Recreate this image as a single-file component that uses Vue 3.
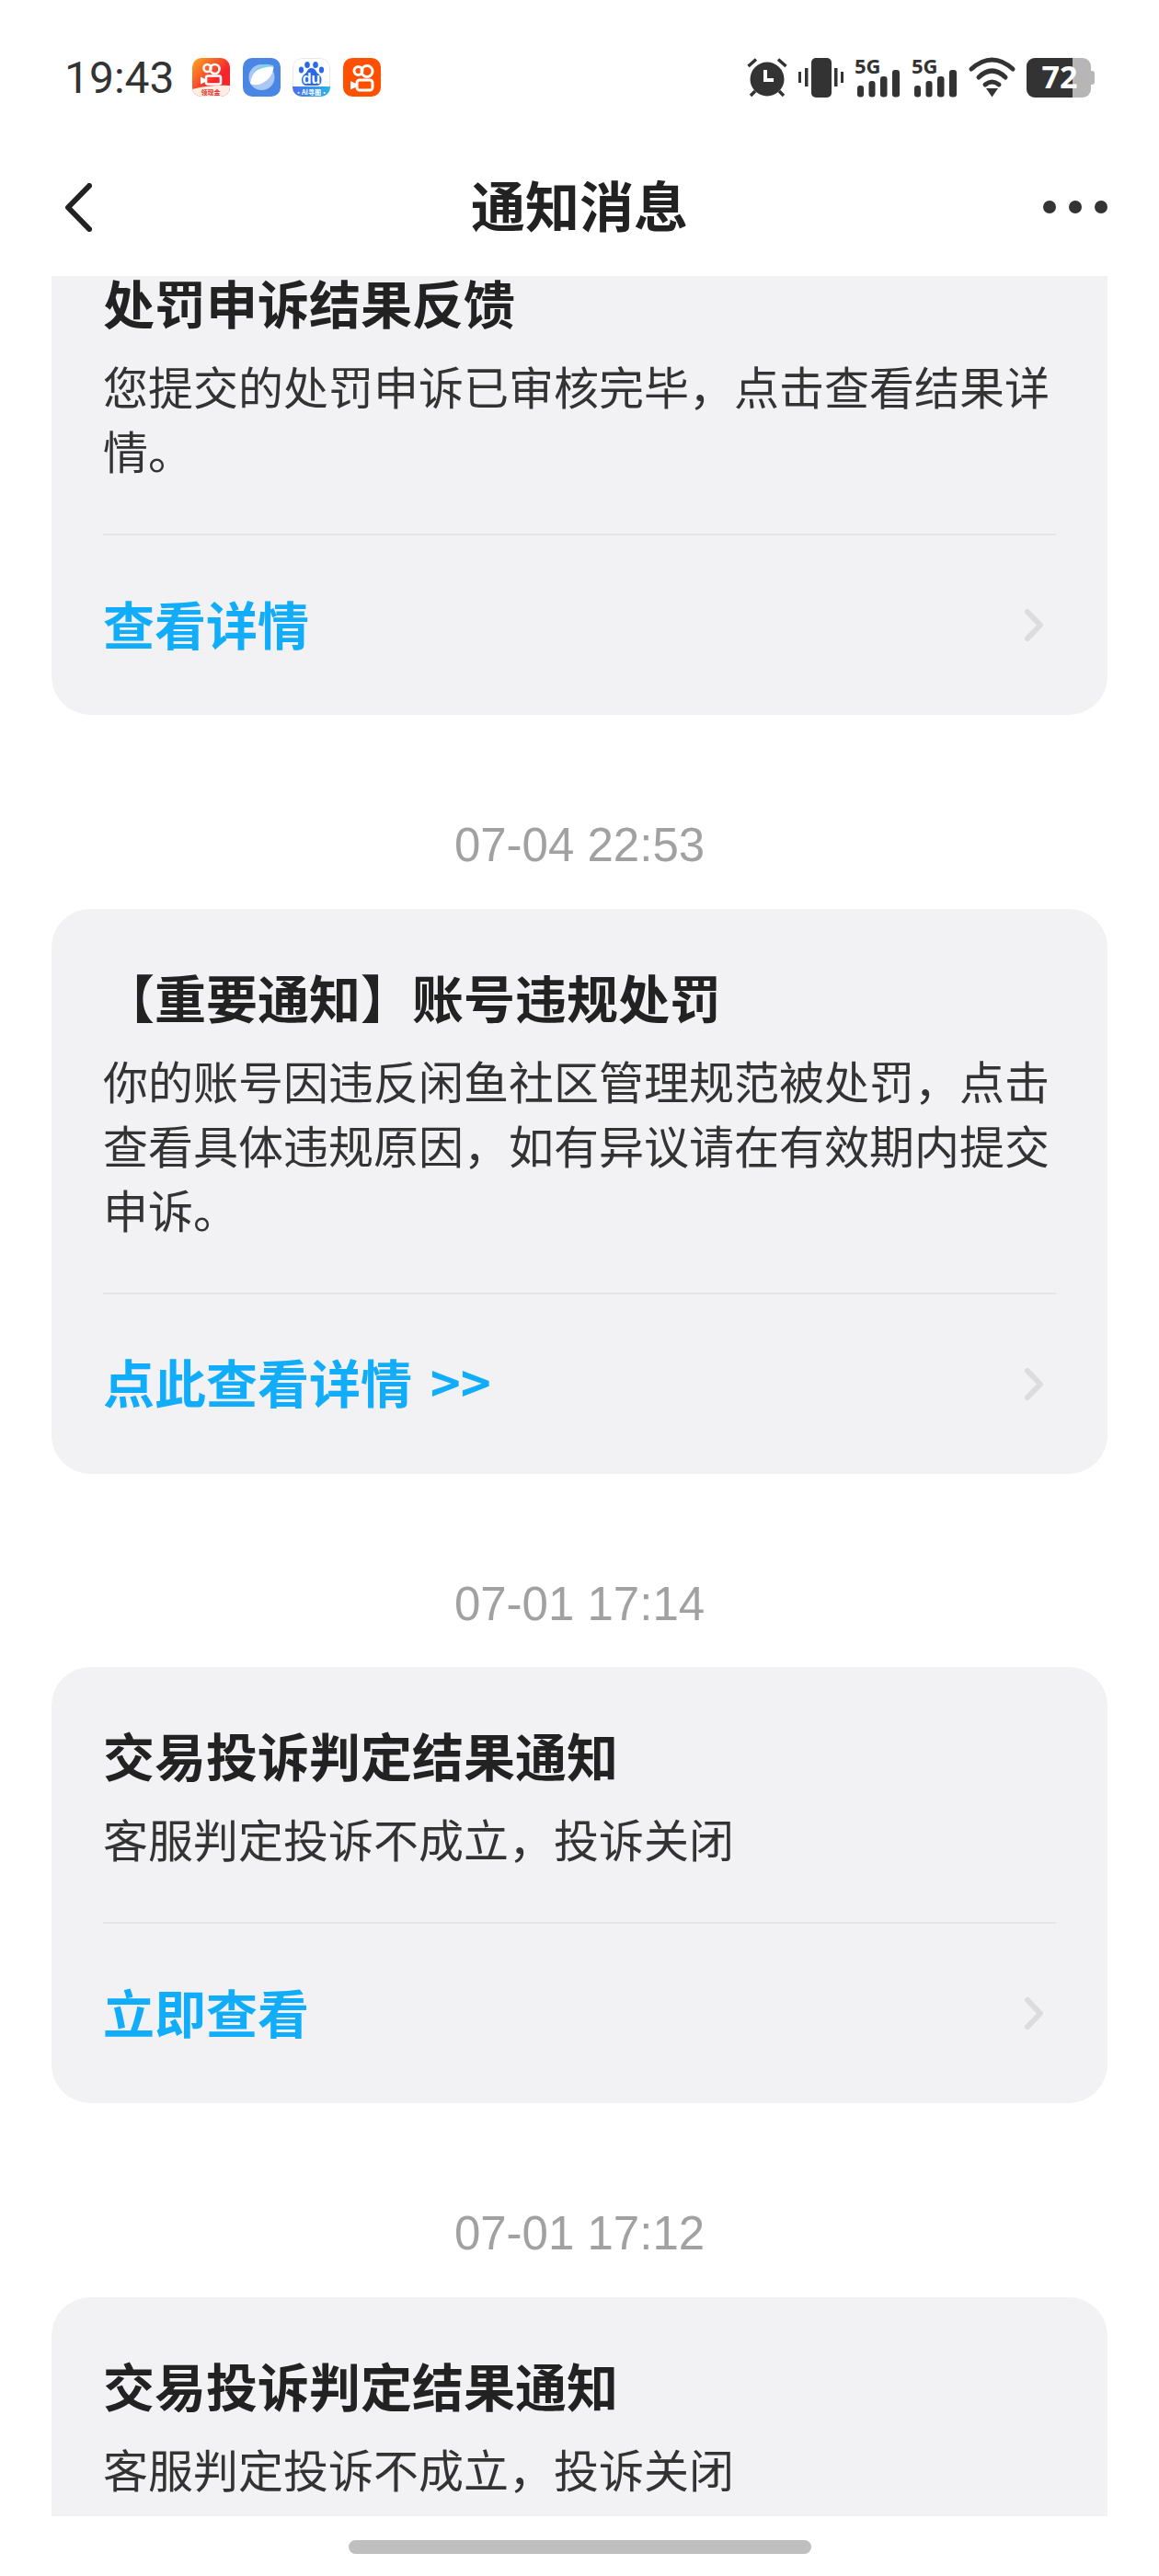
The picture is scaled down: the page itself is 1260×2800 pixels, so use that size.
<template>
  <div class="phone">
    <div class="status-bar">
      <span class="clock">19:43</span>
      <div class="app-icons">
        <svg width="41" height="42" viewBox="0 0 41 42">
          <defs>
            <linearGradient id="ks" x1="0" y1="0" x2="1" y2="1">
              <stop offset="0" stop-color="#ffa91f" />
              <stop offset="0.6" stop-color="#f5252e" />
            </linearGradient>
            <clipPath id="round"><rect width="41" height="42" rx="10" /></clipPath>
          </defs>
          <g clip-path="url(#round)">
            <rect width="41" height="42" fill="url(#ks)" />
            <g fill="none" stroke="#fff" stroke-width="2.6">
              <circle cx="16.500" cy="11" r="4" />
              <circle cx="24.500" cy="12" r="5" />
              <rect x="15" y="19.500" width="16" height="9" rx="2" />
            </g>
            <path d="M9 20.500l6 3v2l-6 3z" fill="#fff" />
            <path d="M0 34q20-5 41-4v12H0z" fill="#fdeee3" />
            <text x="20" y="40" class="tiny red">领现金</text>
          </g>
        </svg>
        <svg width="41" height="42" viewBox="0 0 41 42">
          <rect width="41" height="42" rx="10" fill="#4a86e3" />
          <circle cx="20.5" cy="21" r="14" fill="#a9c8f3" />
          <path d="M8 28Q9 17 18 11q7-4 14-3 2 1 1 5-2 9-11 14-7 4-14 1z" fill="#fff" />
          <path d="M11 16q4-7 12-9 7-1 11 3-10-2-23 6z" fill="#7fd0ec" />
        </svg>
        <svg width="41" height="42" viewBox="0 0 41 42">
          <defs>
            <linearGradient id="band" x1="0" y1="0" x2="1" y2="0">
              <stop offset="0" stop-color="#4f6cf0" />
              <stop offset="1" stop-color="#27b5ea" />
            </linearGradient>
            <clipPath id="round3"><rect width="41" height="42" rx="10" /></clipPath>
          </defs>
          <g clip-path="url(#round3)">
            <rect width="41" height="42" fill="#fff" />
            <rect x="0.5" y="0.5" width="40" height="41" rx="10" fill="none" stroke="#e8e8ec" />
            <rect y="31" width="41" height="11" fill="url(#band)" />
            <g fill="#2a6ae8">
              <ellipse cx="9.5" cy="13" rx="2.6" ry="3.4" />
              <ellipse cx="16" cy="7.5" rx="2.8" ry="3.6" />
              <ellipse cx="25" cy="7.5" rx="2.8" ry="3.6" />
              <ellipse cx="31.5" cy="13" rx="2.6" ry="3.4" />
              <path d="M20.5 11q4 0 6 5 5 3 5 8 0 6-6 6H16q-6 0-6-6 0-5 5-8 2-5 5.500-5z" />
            </g>
            <text x="20.500" y="28" class="du">du</text>
            <text x="20.500" y="39.500" class="tiny white">·AI寻图·</text>
          </g>
        </svg>
        <svg width="41" height="42" viewBox="0 0 41 42">
          <rect width="41" height="42" rx="10" fill="#ff5000" />
          <g fill="none" stroke="#fff" stroke-width="3">
            <circle cx="16.500" cy="14" r="4.500" />
            <circle cx="26" cy="14.500" r="6" />
            <rect x="15" y="24" width="17" height="11" rx="3" />
          </g>
          <path d="M8 25l7 3.500v2.500l-7 3.500z" fill="#fff" />
        </svg>
      </div>
      <div class="sys-icons">
        <svg width="44" height="43" viewBox="0 0 44 43">
          <circle cx="22" cy="23" r="18.500" fill="#333" />
          <path d="M20 13v11h9" fill="none" stroke="#fff" stroke-width="4" />
          <path d="M1.500 9l8.500-7.500M42.500 9L34 1.500M4 41l5-5M40 41l-5-5" stroke="#333" stroke-width="3.500" />
        </svg>
        <svg width="49" height="43" viewBox="0 0 49 43">
          <rect x="14" width="22" height="43" rx="5" fill="#333" />
          <rect y="15" width="3" height="12" fill="#333" />
          <rect x="7" y="11" width="3.500" height="20" fill="#333" />
          <rect x="39" y="11" width="3.500" height="20" fill="#333" />
          <rect x="46" y="15" width="3" height="12" fill="#333" />
        </svg>
        <svg v-for="n in 2" :key="n" width="50" height="43" viewBox="0 0 50 43">
          <text x="0" y="17" class="five-g">5G</text>
          <rect x="3" y="30" width="7" height="12.500" rx="3" fill="#333" />
          <rect x="15.500" y="25" width="7" height="17.500" rx="3" fill="#333" />
          <rect x="28" y="20" width="7.500" height="22.500" rx="3" fill="#333" />
          <rect x="41" y="13" width="8" height="29.500" rx="3" fill="#333" />
        </svg>
        <svg width="51" height="43" viewBox="0 0 51 43">
          <g fill="none" stroke="#333" stroke-width="5" stroke-linecap="round">
            <path d="M3 12Q25.500-8 48 12" />
            <path d="M11 21Q25.500 7 40 21" />
            <path d="M18 29Q25.500 23 33 29" />
          </g>
          <path d="M19 33h13l-6.500 9.500z" fill="#333" />
        </svg>
        <svg width="74" height="43" viewBox="0 0 74 43">
          <defs><clipPath id="charged"><rect width="50" height="43" /></clipPath></defs>
          <rect width="70" height="43" rx="9" fill="#b6b6b6" />
          <rect x="68" y="14" width="6" height="15" rx="3" fill="#b6b6b6" />
          <rect width="70" height="43" rx="9" fill="#333" clip-path="url(#charged)" />
          <text x="36" y="33" class="level">72</text>
        </svg>
      </div>
    </div>

    <header class="nav">
      <svg class="back" width="30" height="53" viewBox="0 0 30 53">
        <path d="M27 3L4 26.500 27 50" fill="none" stroke="#222" stroke-width="6" stroke-linecap="round" stroke-linejoin="round" />
      </svg>
      <h1>通知消息</h1>
      <div class="more"><i></i><i></i><i></i></div>
    </header>

    <main class="list">
      <div class="list-inner">
        <template v-for="(msg, i) in messages" :key="i">
          <p v-if="msg.time" class="time">{{ msg.time }}</p>
          <article class="card">
            <div class="card-body">
              <h2>{{ msg.title }}</h2>
              <p>{{ msg.text }}</p>
            </div>
            <div v-if="msg.link" class="card-link">
              <span>{{ msg.link }}</span>
              <svg width="22" height="35" viewBox="0 0 22 35">
                <path d="M4 3l14 14.500L4 32" fill="none" stroke="#dcdcde" stroke-width="6" stroke-linecap="round" stroke-linejoin="round" />
              </svg>
            </div>
          </article>
        </template>
      </div>
    </main>

    <div class="home-bar"></div>
  </div>
</template>

<script setup>
const messages = [
  {
    title: '处罚申诉结果反馈',
    text: '您提交的处罚申诉已审核完毕，点击查看结果详情。',
    link: '查看详情',
  },
  {
    time: '07-04 22:53',
    title: '【重要通知】账号违规处罚',
    text: '你的账号因违反闲鱼社区管理规范被处罚，点击查看具体违规原因，如有异议请在有效期内提交申诉。',
    link: '点此查看详情 >>',
  },
  {
    time: '07-01 17:14',
    title: '交易投诉判定结果通知',
    text: '客服判定投诉不成立，投诉关闭',
    link: '立即查看',
  },
  {
    time: '07-01 17:12',
    title: '交易投诉判定结果通知',
    text: '客服判定投诉不成立，投诉关闭',
  },
]
</script>

<style>
html, body { background: #fff; }
</style>

<style scoped>
.phone { width: 1260px; height: 2800px; background: #fff; display: flex; flex-direction: column; font-family: "Liberation Sans", "Noto Sans CJK SC", sans-serif; color: #222; overflow: hidden; }

.status-bar { height: 150px; box-sizing: border-box; padding: 63px 70px 0; display: flex; align-items: flex-start; }
.status-bar svg { display: block; flex: none; overflow: visible; }
.clock { font-family: Roboto, sans-serif; font-size: 48px; line-height: 43px; color: #333; width: 139px; }
.app-icons { display: flex; gap: 13.5px; }
.sys-icons { margin-left: auto; display: flex; gap: 12px; }
.five-g { font-family: "Noto Sans", sans-serif; font-weight: 700; font-size: 22px; fill: #333; }
.level { font-family: "Noto Sans", sans-serif; font-weight: 700; font-size: 34px; fill: #fff; text-anchor: middle; }
.tiny { font-family: "Noto Sans CJK SC", sans-serif; font-size: 7px; font-weight: 700; text-anchor: middle; }
.tiny.red { fill: #e8302c; }
.tiny.white { fill: #fff; }
.du { font-family: "Liberation Sans", sans-serif; font-size: 16px; font-weight: 700; fill: #fff; text-anchor: middle; }

.nav { height: 150px; box-sizing: border-box; padding: 0 56px 0 70px; display: flex; align-items: center; justify-content: space-between; position: relative; }
.nav h1 { position: absolute; left: 0; right: 0; top: 0; margin: 0; text-align: center; font-size: 59px; line-height: 144px; font-weight: 700; font-family: "Noto Sans CJK SC", sans-serif; color: #222; }
.back { display: block; }
.more { display: flex; gap: 14px; }
.more i { width: 14px; height: 14px; border-radius: 50%; background: #333; }

.list { height: 435px; flex: 1 1 auto; min-height: 0; overflow: hidden; padding: 0 56px; }
.list-inner { margin-top: -67px; }
.time { margin: 0; padding: 112px 0 38.5px; height: 60px; line-height: 60px; text-align: center; font-size: 51px; color: #a1a1a1; }
.card { background: #f2f2f4; border-radius: 42px; padding: 0 56px; }
.card-body { padding: 67px 0 56px; border-bottom: 2px solid #e5e5e7; font-family: "Noto Sans CJK SC", sans-serif; }
.card-body h2 { margin: 0; font-size: 56px; line-height: 56px; font-weight: 700; color: #222; }
.card-body p { margin: 28px 0 0; font-size: 49px; line-height: 70px; color: #333; }
.card-link { height: 195px; display: flex; align-items: center; justify-content: space-between; }
.card-link span { font-family: "Noto Sans CJK SC", sans-serif; font-size: 56px; font-weight: 700; color: #12adfa; word-spacing: 7px; margin-bottom: 7px; }
.card-link svg { margin-right: 13px; }

.home-bar { width: 503px; height: 15px; border-radius: 8px; background: #bfbfbf; margin: 26px auto 24px; flex: none; }
</style>
